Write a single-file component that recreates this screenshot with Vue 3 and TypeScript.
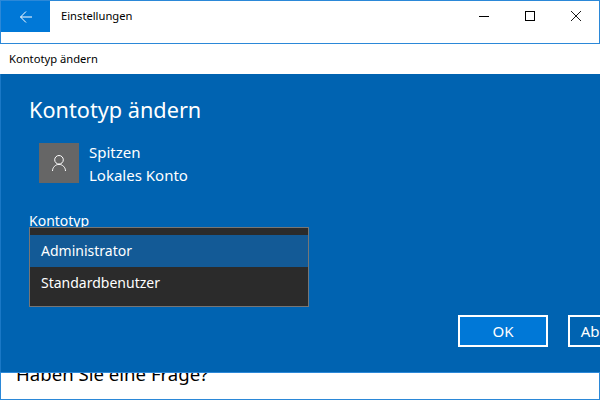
<script setup lang="ts">
const options: { label: string; selected: boolean }[] = [
  { label: 'Administrator', selected: true },
  { label: 'Standardbenutzer', selected: false },
]
</script>

<template>
  <div class="window">
    <header class="titlebar">
      <button class="back" aria-label="Zurück">
        <svg width="12" height="12" viewBox="0 0 12 12" fill="none" stroke="#fff" stroke-width="1">
          <path d="M.5 6H12M6 .5.5 6 6 11.5" />
        </svg>
      </button>
      <span class="app-title">Einstellungen</span>
      <div class="controls">
        <span class="ctl"><svg width="10" height="10" viewBox="0 0 10 10"><path d="M0 5.5H10" stroke="#000" /></svg></span>
        <span class="ctl"><svg width="10" height="10" viewBox="0 0 10 10"><rect x=".5" y=".5" width="9" height="9" fill="none" stroke="#000" /></svg></span>
        <span class="ctl"><svg width="10" height="10" viewBox="0 0 10 10"><path d="M0 0 10 10M10 0 0 10" stroke="#000" stroke-width=".9" /></svg></span>
      </div>
    </header>
    <div class="dialog-title">Kontotyp ändern</div>
    <main class="dialog">
      <h1>Kontotyp ändern</h1>
      <div class="account">
        <div class="avatar">
          <svg width="14" height="16" viewBox="0 0 14 16" fill="none" stroke="#fff" stroke-width="1">
            <circle cx="7" cy="4.8" r="4.3" />
            <path d="M.5 16c0-3.6 2.9-6.6 6.5-6.6s6.5 3 6.5 6.6" />
          </svg>
        </div>
        <div class="account-text">
          <div>Spitzen</div>
          <div>Lokales Konto</div>
        </div>
      </div>
      <label class="field-label">Kontotyp</label>
      <div class="dropdown">
        <div v-for="o in options" :key="o.label" class="option" :class="{ selected: o.selected }">{{ o.label }}</div>
      </div>
      <div class="buttons">
        <button class="btn ok">OK</button>
        <button class="btn cancel">Abbrechen</button>
      </div>
    </main>
    <footer class="footer"><span>Haben Sie eine Frage?</span></footer>
  </div>
</template>

<style>
html, body { margin: 0; background: #fff; }
</style>

<style scoped>
.window {
  width: 600px;
  height: 400px;
  display: flex;
  flex-direction: column;
  overflow: hidden;
  font-family: "Noto Sans", "Open Sans", sans-serif;
  background: #fff;
  position: relative;
}
.titlebar {
  height: 44px;
  box-sizing: border-box;
  border: 1px solid #2b88d8;
  display: flex;
  align-items: flex-start;
  flex: none;
}
.back {
  width: 49px;
  height: 31px;
  border: 0;
  padding: 0;
  background: #0078d7;
  display: flex;
  align-items: center;
  justify-content: center;
}
.app-title {
  margin-left: 11px;
  line-height: 30px;
  font-size: 11.2px;
  color: #000;
}
.controls { margin-left: auto; display: flex; }
.ctl {
  width: 46px;
  height: 30px;
  display: flex;
  align-items: center;
  justify-content: center;
}
.dialog-title {
  height: 30px;
  flex: none;
  box-sizing: border-box;
  padding-left: 9px;
  line-height: 30px;
  font-size: 11.2px;
  color: #000;
}
.dialog {
  flex: none;
  height: 298px;
  box-sizing: border-box;
  background: #0063b1;
  border-left: 1px solid #1a78c6;
  color: #fff;
  padding: 21px 0 0 28px;
  position: relative;
}
h1 {
  margin: 0;
  font-size: 21.7px;
  font-weight: 400;
  line-height: 30px;
}
.account {
  display: flex;
  gap: 10px;
  margin: 18px 0 0 10px;
}
.avatar {
  width: 40px;
  height: 40px;
  background: #666;
  display: flex;
  align-items: center;
  justify-content: center;
}
.account-text { font-size: 15px; line-height: 23px; margin-top: -2px; }
.field-label {
  display: block;
  margin-top: 24px;
  font-size: 14px;
  line-height: 20px;
}
.dropdown {
  position: absolute;
  left: 28px;
  top: 153px;
  width: 280px;
  height: 80px;
  box-sizing: border-box;
  border: 1px solid #767676;
  background: #2b2b2b;
  padding-top: 7px;
}
.option {
  height: 32px;
  line-height: 31px;
  padding-left: 11px;
  font-size: 14px;
  color: #fff;
}
.option.selected { background: #135a96; }
.buttons {
  position: absolute;
  left: 457px;
  top: 241px;
  display: flex;
  gap: 20px;
}
.btn {
  width: 90px;
  height: 32px;
  box-sizing: border-box;
  border: 2px solid #fff;
  background: transparent;
  color: #fff;
  font: inherit;
  font-size: 15px;
  padding: 0;
  flex: none;
}
.btn.cancel { width: 102px; }
.btn.ok { background: #0078d7; }
.footer {
  flex: 1;
  border: 1px solid #2b88d8;
  overflow: hidden;
  font-size: 18.6px;
  color: #000;
  line-height: 24px;
  padding-left: 15px;
}
.footer span { display: block; margin-top: -11px; }
</style>
